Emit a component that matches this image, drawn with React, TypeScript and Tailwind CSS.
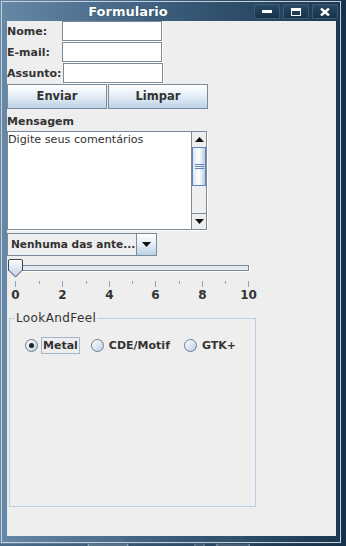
import React from "react";

function TitleButton({ children }: { children: React.ReactNode }) {
  return (
    <div className="w-[26px] h-[15px] flex items-center justify-center rounded-[1px] border border-[#3c5a75] bg-gradient-to-b from-[#2c4a66] to-[#16314a]">
      {children}
    </div>
  );
}

function Field() {
  return <div className="w-[100px] h-[20px] bg-white border border-[#7a8a99] shadow-[1px_1px_0_#ffffff]" />;
}

function Arrow({ down }: { down?: boolean }) {
  return (
    <svg width="9" height="5" viewBox="0 0 9 5">
      <path d={down ? "M0 0H9L4.5 5Z" : "M0 5H9L4.5 0Z"} fill="#111111" />
    </svg>
  );
}

function Radio({ checked }: { checked?: boolean }) {
  return (
    <div className="w-[13px] h-[13px] rounded-full border border-[#6d7c8a] bg-gradient-to-br from-[#ffffff] to-[#b8cfe5] flex items-center justify-center">
      {checked && <div className="w-[5px] h-[5px] rounded-full bg-[#222222]" />}
    </div>
  );
}

const ticks = [8, 55, 102, 148, 195, 241];

export default function App() {
  return (
    <div className="relative w-[346px] h-[546px] overflow-hidden bg-gradient-to-r from-[#4c6e8c] to-[#17304a] font-['DejaVu_Sans',sans-serif] text-[11px] leading-[13px] text-[#333333]">
      {/* desktop bubbles peeking below the frame */}
      <div className="absolute left-[83px] top-[535px] w-[50px] h-[50px] rounded-full border border-white/40 bg-white/15" />
      <div className="absolute left-[214px] top-[535px] w-[38px] h-[38px] rounded-full border border-white/40 bg-white/15" />
      <div className="absolute left-[194px] top-[538px] w-[11px] h-[11px] rounded-full border border-white/30 bg-white/10" />

      <div className="relative w-[342px] h-[544px] p-px bg-gradient-to-r from-[#6a8caa]/90 via-[#3b5d7b]/90 to-[#1b3850]/95">
        <div className="h-full border border-[#c3cfda] flex flex-col pl-[5px] pr-[4px] pb-[6px]">
          {/* title bar */}
          <div className="h-[19px] -ml-[5px] -mr-[4px] flex items-start">
            <div className="w-[252px] h-[19px] flex items-center justify-center">
              <span className="text-[13px] font-bold text-white [text-shadow:0_0_1px_#1b3048]">Formulario</span>
            </div>
            <div className="flex gap-[3px] mt-[2px]">
              <TitleButton>
                <div className="w-[10px] h-[3px] bg-white" />
              </TitleButton>
              <TitleButton>
                <div className="w-[10px] h-[8px] border border-t-[3px] border-white" />
              </TitleButton>
              <TitleButton>
                <svg width="10" height="8" viewBox="0 0 10 8">
                  <path d="M1 0.5L9 7.5M9 0.5L1 7.5" stroke="#ffffff" strokeWidth="2.4" />
                </svg>
              </TitleButton>
            </div>
          </div>

          {/* content */}
          <div className="flex-1 bg-[#eeeeee] flex flex-col">
            <div className="flex flex-col gap-px">
              <div className="flex items-center h-[20px]">
                <span className="w-[55px] font-bold">Nome:</span>
                <Field />
              </div>
              <div className="flex items-center h-[20px]">
                <span className="w-[55px] font-bold">E-mail:</span>
                <Field />
              </div>
              <div className="flex items-center h-[20px]">
                <span className="w-[56px] font-bold">Assunto:</span>
                <Field />
              </div>
              <div className="flex gap-px">
                <button className="w-[100px] h-[25px] border border-[#7a8a99] bg-gradient-to-b from-[#ffffff] via-[#e4edf6] to-[#bcd1e7] font-bold text-[11.5px] text-[#333333]">
                  Enviar
                </button>
                <button className="w-[100px] h-[25px] border border-[#7a8a99] bg-gradient-to-b from-[#ffffff] via-[#e4edf6] to-[#bcd1e7] font-bold text-[11.5px] text-[#333333]">
                  Limpar
                </button>
              </div>
            </div>

            <div className="mt-[6px] font-bold">Mensagem</div>

            <div className="mt-[3px] w-[200px] h-[99px] flex border border-[#7a8a99] bg-white shadow-[1px_1px_0_#ffffff]">
              <div className="flex-1 pt-px text-[11.2px]">Digite seus comentários</div>
              <div className="w-[15px] flex flex-col border-l border-[#7a8a99] bg-[#eeeeee]">
                <div className="h-[15px] flex items-center justify-center">
                  <Arrow />
                </div>
                <div className="h-[39px] border border-[#6382bf] bg-gradient-to-r from-[#dbe6f2] via-[#ffffff] to-[#b8cfe5] flex flex-col items-center justify-center gap-px">
                  <div className="w-[9px] h-px bg-[#6382bf]" />
                  <div className="w-[9px] h-px bg-[#6382bf]" />
                  <div className="w-[9px] h-px bg-[#6382bf]" />
                </div>
                <div className="h-[27px]" />
                <div className="h-[16px] border-t border-[#7a8a99] flex items-center justify-center">
                  <Arrow down />
                </div>
              </div>
            </div>

            {/* combo */}
            <div className="mt-[3px] w-[150px] h-[23px] flex">
              <div className="w-[130px] h-full border border-[#7a8a99] bg-[#eeeeee] flex items-center pl-[3px] font-bold text-[10.6px] whitespace-nowrap overflow-hidden">
                Nenhuma das ante...
              </div>
              <div className="w-[20px] h-full border border-l-0 border-[#7a8a99] bg-gradient-to-b from-[#ffffff] via-[#e4edf6] to-[#bcd1e7] flex items-center justify-center">
                <Arrow down />
              </div>
            </div>

            {/* slider */}
            <div className="relative mt-[3px] h-[59px] w-[250px]">
              <div className="absolute left-[1px] top-[6px] w-[241px] h-[6px] border border-[#7a8a99] bg-[#e4eaf0] shadow-[1px_1px_0_#ffffff]" />
              <svg className="absolute left-[1px] top-0" width="15" height="19" viewBox="0 0 15 19">
                <defs>
                  <linearGradient id="thumb" x1="0" y1="0" x2="0" y2="1">
                    <stop offset="0" stopColor="#ffffff" />
                    <stop offset="1" stopColor="#bcd1e7" />
                  </linearGradient>
                </defs>
                <path d="M2 0.5H13Q14.5 0.5 14.5 2V11L7.5 18L0.5 11V2Q0.5 0.5 2 0.5Z" fill="url(#thumb)" stroke="#3d4650" />
              </svg>
              <svg className="absolute left-0 top-[22px]" width="250" height="7" viewBox="0 0 250 7">
                {ticks.map((x) => (
                  <line key={x} x1={x + 0.5} y1="0" x2={x + 0.5} y2="6" stroke="#8aa5c2" />
                ))}
                {ticks.slice(0, 5).map((x, i) => {
                  const m = Math.round((x + ticks[i + 1]) / 2);
                  return <line key={"m" + x} x1={m + 0.5} y1="0" x2={m + 0.5} y2="3" stroke="#8aa5c2" />;
                })}
              </svg>
              {["0", "2", "4", "6", "8", "10"].map((t, i) => (
                <span
                  key={t}
                  className="absolute top-[30px] -translate-x-1/2 font-bold text-[12px]"
                  style={{ left: ticks[i] + 0.5 }}
                >
                  {t}
                </span>
              ))}
            </div>

            {/* LookAndFeel group */}
            <div className="relative ml-[2px] w-[247px] h-[189px] border border-[#b8cfe5]">
              <span className="absolute left-[5px] -top-[8px] px-px bg-[#eeeeee] text-[12px] leading-[14px] tracking-[0.4px]">
                LookAndFeel
              </span>
              <div className="mt-[18px] ml-[15px] flex items-center">
                <Radio checked />
                <span className="ml-[3px] px-px h-[17px] flex items-center border border-[#a3b8cc] font-bold">Metal</span>
                <div className="ml-[11px]">
                  <Radio />
                </div>
                <span className="ml-[3px] px-px h-[17px] flex items-center border border-transparent font-bold">CDE/Motif</span>
                <div className="ml-[12px]">
                  <Radio />
                </div>
                <span className="ml-[3px] px-px h-[17px] flex items-center border border-transparent font-bold">GTK+</span>
              </div>
            </div>
          </div>
        </div>
      </div>
    </div>
  );
}
